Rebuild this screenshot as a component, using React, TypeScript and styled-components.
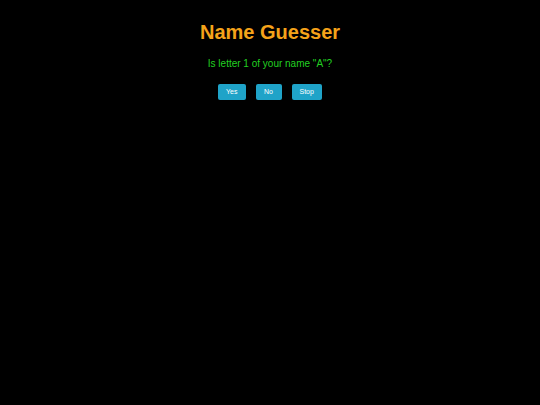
import React from "react";
import styled, { createGlobalStyle } from "styled-components";

const Global = createGlobalStyle`
  html, body { margin: 0; padding: 0; background: #000; }
  body { font-family: "Liberation Sans", Arial, sans-serif; }
`;

const Page = styled.div`
  min-height: 405px;
  background: #000;
  display: flex;
  flex-direction: column;
  align-items: center;
  padding-top: 21px;
  box-sizing: border-box;
`;

const Title = styled.h1`
  margin: 0;
  font-size: 20px;
  line-height: 23px;
  font-weight: bold;
  color: #f5a31a;
`;

const Question = styled.p`
  margin: 14px 0 0;
  font-size: 10px;
  line-height: 12px;
  color: #22d022;
`;

const Buttons = styled.div`
  display: flex;
  gap: 10px;
  margin-top: 14px;
`;

const Button = styled.button`
  font-family: "Liberation Sans", Arial, sans-serif;
  font-size: 7px;
  line-height: 8px;
  color: #fff;
  background: #1fa3c8;
  border: none;
  border-radius: 2px;
  padding: 4px 8px;
  height: 16px;
  min-width: 26px;
  cursor: pointer;
`;

export default function App() {
  return (
    <>
      <Global />
      <Page>
        <Title>Name Guesser</Title>
        <Question>Is letter 1 of your name "A"?</Question>
        <Buttons>
          <Button>Yes</Button>
          <Button>No</Button>
          <Button>Stop</Button>
        </Buttons>
      </Page>
    </>
  );
}
